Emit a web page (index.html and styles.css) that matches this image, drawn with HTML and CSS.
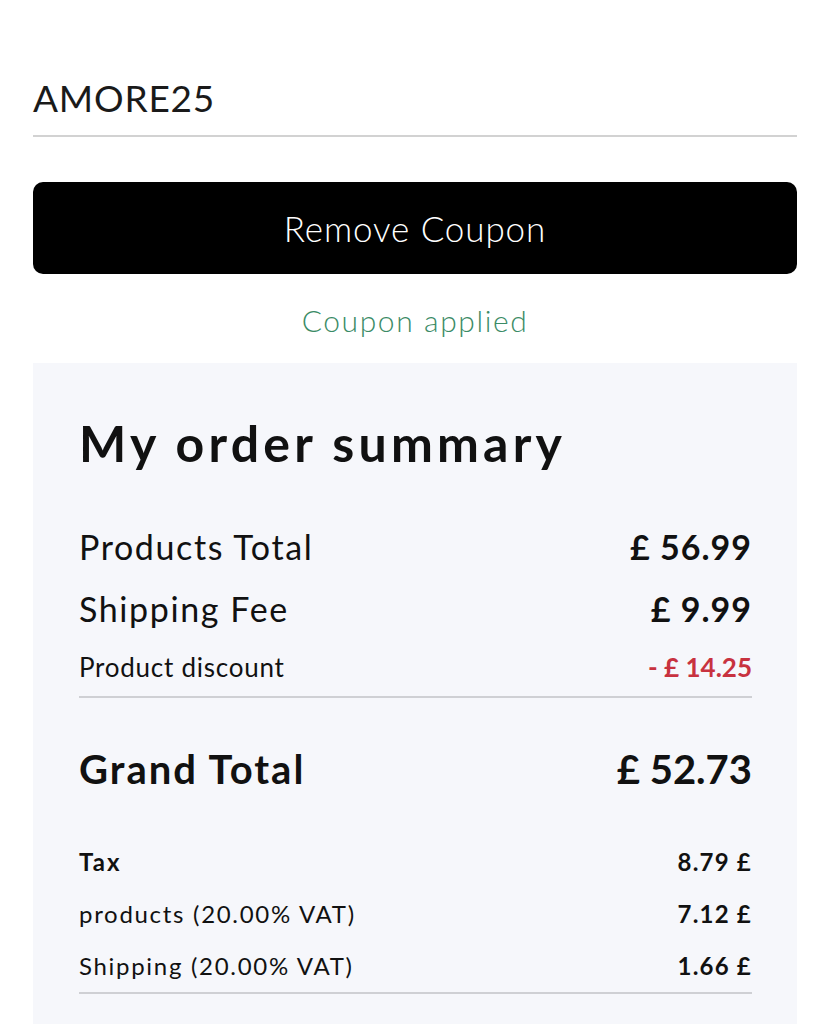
FILE: index.html
```html
<!DOCTYPE html>
<html lang="en">
<head>
<meta charset="utf-8">
<title>Order summary</title>
<link rel="stylesheet" href="styles.css">
</head>
<body>
<main class="page">
  <div class="coupon-input">AMORE25</div>
  <button class="remove-btn" type="button">Remove Coupon</button>
  <p class="coupon-status">Coupon applied</p>
  <section class="summary">
    <h1 class="summary-title">My order summary</h1>
    <div class="row row-main"><span>Products Total</span><span class="val">£ 56.99</span></div>
    <div class="row row-main"><span>Shipping Fee</span><span class="val">£ 9.99</span></div>
    <div class="row row-small"><span>Product discount</span><span class="val discount">- £ 14.25</span></div>
    <hr class="divider">
    <div class="row row-grand"><span>Grand Total</span><span class="val">£ 52.73</span></div>
    <div class="tax">
      <div class="row row-tax"><span class="tax-label">Tax</span><span class="val">8.79 £</span></div>
      <div class="row row-tax"><span>products (20.00% VAT)</span><span class="val">7.12 £</span></div>
      <div class="row row-tax"><span>Shipping (20.00% VAT)</span><span class="val">1.66 £</span></div>
    </div>
    <hr class="divider">
  </section>
</main>
</body>
</html>
```
FILE: styles.css
```css
* { box-sizing: border-box; }
html, body { margin: 0; padding: 0; background: #fff; }
body {
  font-family: Lato, "Noto Sans", sans-serif;
  color: #111;
}
.page {
  padding: 0 33px;
}
.coupon-input {
  padding-top: 76px;
  padding-bottom: 15px;
  font-family: Lato, "Noto Sans", sans-serif;
  font-weight: 400;
  font-size: 37px;
  line-height: 44px;
  letter-spacing: 0.8px;
  color: #1a1a1a;
  border-bottom: 2px solid #d2d2d2;
}
.remove-btn {
  display: block;
  width: 100%;
  height: 92px;
  margin-top: 45px;
  border: 0;
  border-radius: 10px;
  background: #000;
  color: #fff;
  font-family: Lato, sans-serif;
  font-weight: 300;
  font-size: 35px;
  letter-spacing: 0.9px;
}
.coupon-status {
  margin: 26px 0 0;
  text-align: center;
  font-size: 30px;
  line-height: 40px;
  font-weight: 300;
  letter-spacing: 1.6px;
  color: #3b8b66;
}
.summary {
  margin-top: 23px;
  background: #f6f7fb;
  padding: 50px 45px 40px 46px;
}
.summary-title {
  margin: 0 0 42px;
  font-size: 50px;
  line-height: 60px;
  font-weight: 700;
  letter-spacing: 4.2px;
  color: #111;
}
.row {
  display: flex;
  justify-content: space-between;
  align-items: center;
}
.val { font-weight: 700; }
.row-main {
  height: 62px;
  font-size: 34px;
  font-weight: 400;
  letter-spacing: 1.6px;
}
.row-main .val { letter-spacing: 1px; }
.row-small {
  height: 56px;
  font-size: 26px;
  letter-spacing: 0.75px;
}
.row-small .val { letter-spacing: 0; }
.discount { color: #c8323f; }
.divider {
  margin: 1px 0 0;
  border: 0;
  height: 2px;
  background: #cfd0d4;
}
.row-grand {
  margin-top: 46px;
  height: 50px;
  font-size: 40px;
  font-weight: 700;
  letter-spacing: 2px;
}
.row-grand .val { letter-spacing: 0; }
.tax {
  margin-top: 41px;
}
.row-tax {
  height: 52px;
  font-size: 24px;
  letter-spacing: 1.7px;
}
.row-tax .val { letter-spacing: 1.2px; }
.tax-label { font-weight: 700; letter-spacing: 2px; }
```
